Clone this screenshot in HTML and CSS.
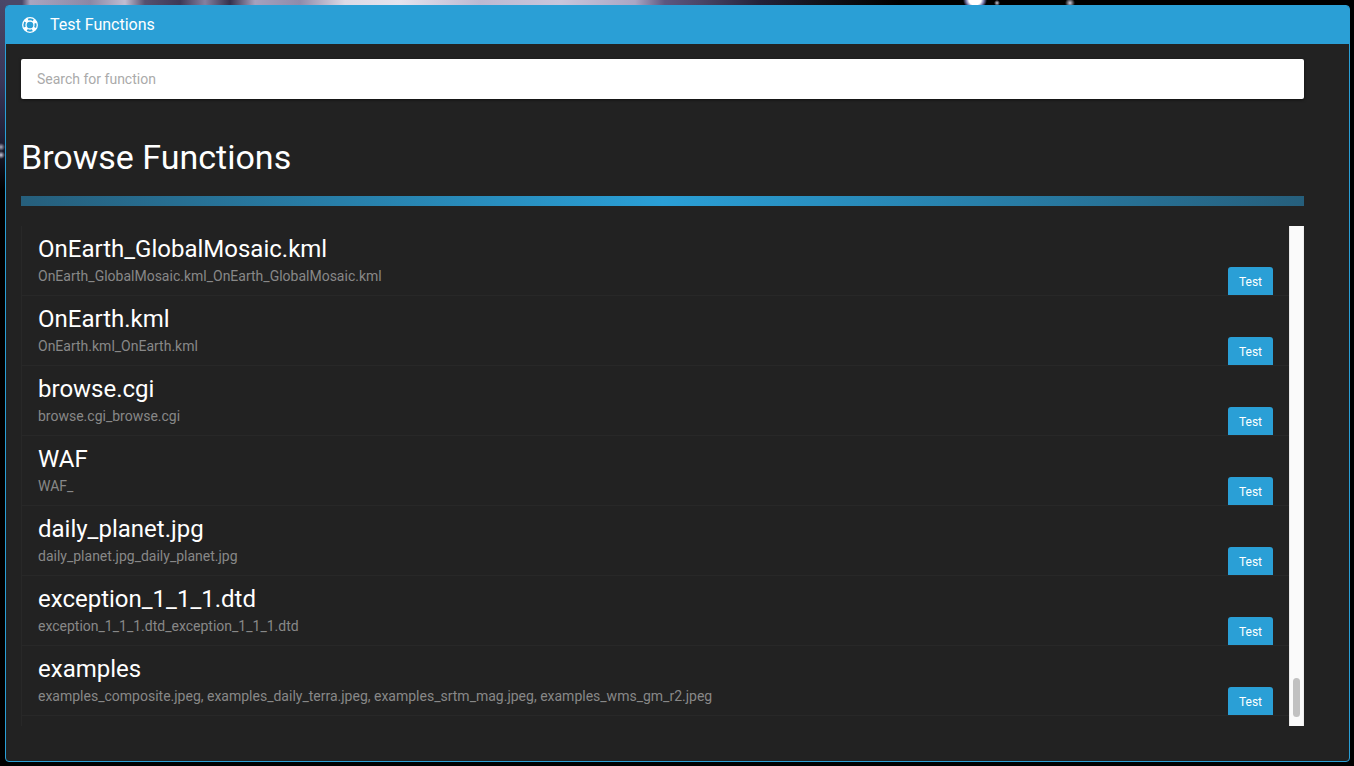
FILE: index.html
```html
<!DOCTYPE html>
<html lang="en">
<head>
<meta charset="utf-8">
<title>Test Functions</title>
<link rel="stylesheet" href="styles.css">
</head>
<body>
<main class="panel">
  <header class="panel-header">
    <svg class="panel-icon" viewBox="0 0 16 16" aria-hidden="true">
      <circle cx="8" cy="8" r="7.300" fill="none" stroke="#fff" stroke-width="1.300"/>
      <circle cx="8" cy="8" r="4" fill="none" stroke="#fff" stroke-width="1.300"/>
      <circle cx="8" cy="8" r="5.700" fill="none" stroke="#fff" stroke-width="3.400" stroke-dasharray="3.600 5.354" stroke-dashoffset="-2.677"/>
    </svg>
    <h1 class="panel-title">Test Functions</h1>
  </header>
  <div class="panel-body">
    <input class="search" type="text" placeholder="Search for function" aria-label="Search for function">
    <h2 class="heading">Browse Functions</h2>
    <div class="divider"></div>
    <div class="browser">
      <ul class="list">
        <li class="item"><div class="info"><h3 class="name">OnEarth_GlobalMosaic.kml</h3><p class="detail">OnEarth_GlobalMosaic.kml_OnEarth_GlobalMosaic.kml</p></div><button class="test" type="button">Test</button></li>
        <li class="item"><div class="info"><h3 class="name">OnEarth.kml</h3><p class="detail">OnEarth.kml_OnEarth.kml</p></div><button class="test" type="button">Test</button></li>
        <li class="item"><div class="info"><h3 class="name">browse.cgi</h3><p class="detail">browse.cgi_browse.cgi</p></div><button class="test" type="button">Test</button></li>
        <li class="item"><div class="info"><h3 class="name">WAF</h3><p class="detail">WAF_</p></div><button class="test" type="button">Test</button></li>
        <li class="item"><div class="info"><h3 class="name">daily_planet.jpg</h3><p class="detail">daily_planet.jpg_daily_planet.jpg</p></div><button class="test" type="button">Test</button></li>
        <li class="item"><div class="info"><h3 class="name">exception_1_1_1.dtd</h3><p class="detail">exception_1_1_1.dtd_exception_1_1_1.dtd</p></div><button class="test" type="button">Test</button></li>
        <li class="item"><div class="info"><h3 class="name">examples</h3><p class="detail">examples_composite.jpeg, examples_daily_terra.jpeg, examples_srtm_mag.jpeg, examples_wms_gm_r2.jpeg</p></div><button class="test" type="button">Test</button></li>
      </ul>
      <div class="track" aria-hidden="true"><div class="thumb"></div></div>
    </div>
  </div>
</main>
</body>
</html>
```
FILE: styles.css
```css
* { box-sizing: border-box; }

body {
  min-height: 100vh;
  margin: 0;
  padding: 5px 4px 4px 5px;
  display: flex;
  font-family: Roboto, sans-serif;
  color: #fff;
  background:
    radial-gradient(ellipse 12px 10px at 975px 0, #fff 50%, #77a 75%, transparent),
    radial-gradient(circle 5px at 1070px 3px, #ccd, transparent),
    radial-gradient(circle 3px at 997px 3px, #ccd, transparent),
    radial-gradient(circle 4px at 1px 147px, #aab, transparent),
    radial-gradient(circle 4px at 1px 155px, #ccd, transparent),
    linear-gradient(90deg, transparent 22px, #a9a5c0 30px, #8b87a5 90px, #c0bdd2 125px, #55506f 145px, #3d3856 180px, #8580a0 205px, #34304c 230px, #a5a1be 255px, #8f8bab 300px, #dcdae6 345px, #e4e3ee 400px, #bcb9d2 480px, #c8c6dc 560px, #aaa6c4 635px, #5c5780 665px, #4a4668 700px, #23223a 760px, #12131c 820px, #000 900px) no-repeat 0 0 / 100% 5px,
    linear-gradient(#4a4768, #3a3759 80px, #201f35 140px, #000 190px) no-repeat 0 0 / 5px 190px,
    linear-gradient(#4a4768, #4a4768) no-repeat 0 0 / 30px 10px,
    #000;
}

.panel {
  flex: 1;
  display: flex;
  flex-direction: column;
  border: 1px solid #2a9fd6;
  border-radius: 4px;
  background: #222;
}

.panel-header {
  display: flex;
  align-items: center;
  gap: 12px;
  height: 38px;
  padding: 0 16px;
  border-radius: 2px 2px 0 0;
  background: #2a9fd6;
}

.panel-icon { width: 16px; height: 16px; }

.panel-title {
  margin: 0;
  font-size: 16px;
  font-weight: 400;
  line-height: 20px;
}

.panel-body { padding: 15px 45px 35px 15px; }

.search {
  display: block;
  width: 100%;
  height: 40px;
  padding: 0 16px;
  border: 0;
  border-radius: 2px;
  background: #fff;
  box-shadow: 0 1px 3px #0008;
  color: #222;
  font: 14px/20px Roboto, sans-serif;
}

.search::placeholder { color: #aaa; opacity: 1; }

.heading {
  margin: 38px 0 19px;
  font-size: 34px;
  font-weight: 400;
  line-height: 40px;
}

.divider {
  height: 10px;
  margin-bottom: 20px;
  background: linear-gradient(90deg, #265f7c, #2a9fd6 50%, #265f7c);
}

.browser { display: flex; height: 500px; }

.list {
  flex: 1;
  min-width: 0;
  margin: 0;
  padding: 0;
  list-style: none;
  border-left: 1px solid #282828;
  overflow: hidden;
}

.item {
  display: flex;
  align-items: flex-end;
  justify-content: space-between;
  height: 70px;
  padding: 0 16px;
  border-bottom: 1px solid #282828;
}

.info { align-self: flex-start; padding-top: 8px; }

.name {
  margin: 0;
  font-size: 24px;
  font-weight: 400;
  line-height: 30px;
}

.detail {
  margin: 0;
  padding-top: 2px;
  color: #888;
  font-size: 14px;
  line-height: 20px;
}

.test {
  width: 45px;
  height: 28px;
  padding: 2px 0 0;
  border: 0;
  border-radius: 3px 3px 0 0;
  background: #2a9fd6;
  color: #fff;
  font: 12px/18px Roboto, sans-serif;
}

.track {
  display: flex;
  flex-direction: column;
  justify-content: flex-end;
  width: 15px;
  padding: 0 3px 9px 3px;
  border-left: 1px solid #e8e8e8;
  border-right: 1px solid #eee;
  background: #fafafa;
}

.thumb { height: 39px; border-radius: 4px; background: #c1c1c1; }
```
